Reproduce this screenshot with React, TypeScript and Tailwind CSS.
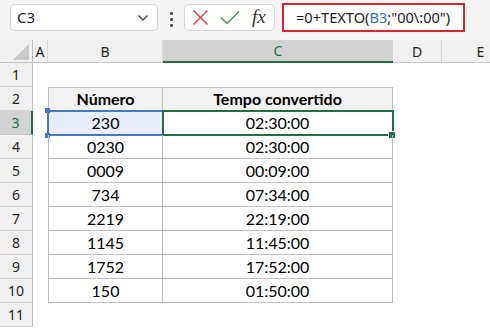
import React from "react";

const data: [string, string][] = [
  ["230", "02:30:00"],
  ["0230", "02:30:00"],
  ["0009", "00:09:00"],
  ["734", "07:34:00"],
  ["2219", "22:19:00"],
  ["1145", "11:45:00"],
  ["1752", "17:52:00"],
  ["150", "01:50:00"],
];

function RowHead({ n, active }: { n: number; active?: boolean }) {
  return active ? (
    <div className="w-[33px] h-full shrink-0 bg-[#d3d3d3] border-r-2 border-r-[#1e7145] border-b border-b-[#c8c8c8] flex items-center justify-center text-[#1e7145] text-[14px] font-['Noto_Sans',sans-serif]">
      {n}
    </div>
  ) : (
    <div className="w-[33px] h-full shrink-0 bg-[#f0f0f0] border-r border-r-[#bcbcbc] border-b border-b-[#d4d4d4] flex items-center justify-center text-[#222] text-[14px] font-['Noto_Sans',sans-serif]">
      {n}
    </div>
  );
}

export default function App() {
  return (
    <div className="w-[490px] h-[328px] overflow-hidden bg-white font-['Lato',sans-serif] text-black">
      {/* toolbar */}
      <div className="h-[40px] bg-[#f5f5f5] flex items-start pt-[4px] pl-[10px]">
        <div className="w-[148px] h-[27px] shrink-0 bg-white border border-[#d6d6d6] rounded-[5px] flex items-center justify-between pl-[6px] pr-[8px]">
          <span className="text-[15px] text-[#222] font-['Noto_Sans',sans-serif]">C3</span>
          <svg width="12" height="8" viewBox="0 0 12 8" fill="none">
            <path d="M1.5 1.5 L6 6 L10.5 1.5" stroke="#444" strokeWidth="1.3" />
          </svg>
        </div>
        <div className="w-[26px] shrink-0 flex flex-col items-center gap-[3px] pt-[8px]">
          <div className="w-[3px] h-[3px] bg-[#555] rounded-[1px]" />
          <div className="w-[3px] h-[3px] bg-[#555] rounded-[1px]" />
          <div className="w-[3px] h-[3px] bg-[#555] rounded-[1px]" />
        </div>
        <div className="w-[91px] h-[27px] shrink-0 bg-white border border-[#d6d6d6] rounded-[5px] flex items-center pl-[7px]">
          <svg width="17" height="17" viewBox="0 0 17 17" fill="none">
            <path d="M1.5 1.5 L15.5 15.5 M15.5 1.5 L1.5 15.5" stroke="#e2404a" strokeWidth="1.5" />
          </svg>
          <svg className="ml-[11px]" width="20" height="15" viewBox="0 0 20 15" fill="none">
            <path d="M1 7.5 L7 13.5 L19 1.5" stroke="#3e9a58" strokeWidth="1.5" />
          </svg>
          <span className="ml-[12px] text-[19px] italic text-[#333] font-['Liberation_Serif',serif] leading-none -mt-[2px]">
            fx
          </span>
        </div>
        <div className="ml-[7px] -mt-[1px] w-[183px] h-[29px] shrink-0 bg-white border-[2.5px] border-[#d7262e] flex items-center pl-[12px]">
          <span className="text-[14.6px] text-[#222] font-['Noto_Sans',sans-serif] whitespace-nowrap">
            =0+TEXTO(<span className="text-[#2f6ec4]">B3</span>;"00\:00")
          </span>
        </div>
      </div>

      {/* column headers */}
      <div className="h-[23px] flex bg-[#f0f0f0] border-b border-[#c4c4c4] text-[14px] text-[#222] font-['Noto_Sans',sans-serif]">
        <div className="w-[33px] shrink-0 border-r border-[#bcbcbc] flex items-end justify-end pr-[3px] pb-[2px]">
          <svg width="16" height="16" viewBox="0 0 16 16">
            <path d="M16 0 L16 16 L0 16 Z" fill="#c9c9c9" />
          </svg>
        </div>
        <div className="w-[15px] shrink-0 border-r border-[#d6d6d6] flex items-center justify-center">A</div>
        <div className="w-[115px] shrink-0 border-r border-[#d6d6d6] flex items-center justify-center">B</div>
        <div className="w-[230px] shrink-0 bg-[#d3d3d3] border-b-2 border-[#1e7145] -mb-px flex items-center justify-center text-[#1e7145]">
          C
        </div>
        <div className="w-[49px] shrink-0 border-r border-[#d6d6d6] flex items-center justify-center">D</div>
        <div className="flex-1 flex items-center justify-center pl-[29px]">E</div>
      </div>

      {/* row 1 */}
      <div className="h-[24px] flex">
        <RowHead n={1} />
        <div className="flex-1" />
      </div>

      {/* row 2 header */}
      <div className="h-[24px] flex">
        <RowHead n={2} />
        <div className="w-[15px] shrink-0" />
        <div className="w-[115px] shrink-0 bg-[#f2f2f2] border border-[#bfbfbf] flex items-center justify-center font-bold text-[16px]">
          Número
        </div>
        <div className="w-[230px] shrink-0 bg-[#f2f2f2] border-y border-r border-[#bfbfbf] flex items-center justify-center font-bold text-[16px]">
          Tempo convertido
        </div>
      </div>

      {data.map(([b, c], i) => {
        const n = i + 3;
        const active = n === 3;
        return (
          <div key={n} className="h-[24px] flex">
            <RowHead n={n} active={active} />
            <div className="w-[15px] shrink-0" />
            <div
              className={`relative w-[115px] shrink-0 border-x border-b border-[#bfbfbf] flex items-center justify-center text-[16px] ${
                active ? "bg-[#e8eef9]" : ""
              }`}
            >
              {b}
              {active && (
                <>
                  <div className="absolute left-[-2px] right-0 top-[-1px] bottom-[-2px] border-y-2 border-l-2 border-[#4a74c4]" />
                  <div className="absolute left-[-4px] top-[-3px] w-[5px] h-[5px] bg-[#4a74c4]" />
                  <div className="absolute left-[-4px] bottom-[-4px] w-[5px] h-[5px] bg-[#4a74c4]" />
                </>
              )}
            </div>
            <div className="relative w-[230px] shrink-0 border-r border-b border-[#bfbfbf] flex items-center justify-center text-[16px]">
              {c}
              {active && (
                <>
                  <div className="absolute left-[-1px] right-[-2px] top-[-1px] bottom-[-2px] border-2 border-[#1e7145]" />
                  <div className="absolute right-[-3px] bottom-[-4px] w-[7px] h-[7px] bg-[#1e7145] border-l border-t border-white" />
                </>
              )}
            </div>
          </div>
        );
      })}

      {/* row 11 */}
      <div className="h-[24px] flex">
        <RowHead n={11} />
        <div className="flex-1" />
      </div>
    </div>
  );
}
